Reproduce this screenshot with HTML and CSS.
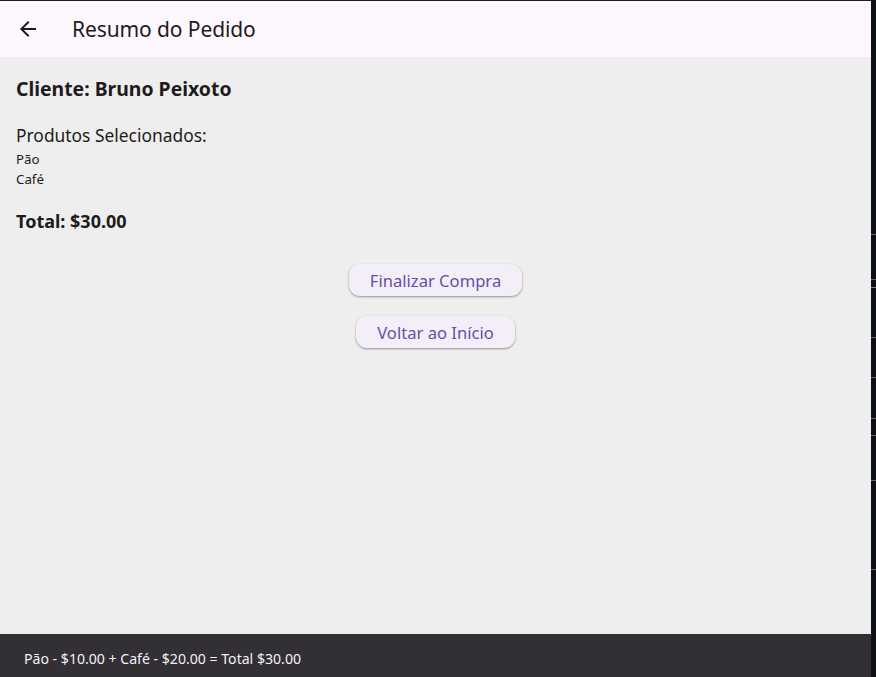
FILE: index.html
```html
<!DOCTYPE html>
<html lang="pt">
<head>
<meta charset="utf-8">
<title>Resumo do Pedido</title>
<link rel="stylesheet" href="styles.css">
</head>
<body>
<div class="screen">
  <div class="app">
    <header class="appbar">
      <button class="back" aria-label="Voltar">
        <svg width="24" height="24" viewBox="0 0 24 24"><path d="M20 11H7.83l5.59-5.59L12 4l-8 8 8 8 1.41-1.41L7.83 13H20v-2z" fill="#1d1b20"/></svg>
      </button>
      <h1 class="title">Resumo do Pedido</h1>
    </header>
    <main class="content">
      <h2 class="client">Cliente: Bruno Peixoto</h2>
      <p class="section">Produtos Selecionados:</p>
      <ul class="items">
        <li>Pão</li>
        <li>Café</li>
      </ul>
      <p class="total">Total: $30.00</p>
      <div class="actions">
        <button class="btn">Finalizar Compra</button>
        <button class="btn">Voltar ao Início</button>
      </div>
    </main>
    <footer class="snackbar">Pão - $10.00 + Café - $20.00 = Total $30.00</footer>
  </div>
  <div class="side">
    <span class="tick t1"></span>
    <span class="tick t2"></span>
    <span class="tick t3"></span>
    <span class="tick t4"></span>
    <span class="tick t5"></span>
    <span class="tick t6"></span>
    <span class="tick t7"></span>
    <span class="tick t8"></span>
    <span class="tick t9"></span>
  </div>
</div>
</body>
</html>
```

FILE: styles.css
```css
* { box-sizing: border-box; }
html, body { margin: 0; padding: 0; }
body {
  width: 876px;
  height: 677px;
  overflow: hidden;
  font-family: "Noto Sans", "Open Sans", sans-serif;
  background: #0d1015;
}
.screen {
  display: flex;
  width: 876px;
  height: 677px;
}
.app {
  width: 871px;
  height: 677px;
  display: flex;
  flex-direction: column;
  border-top: 1px solid #1e1e22;
  background: #eeeeee;
}
.appbar {
  height: 56px;
  flex: none;
  display: flex;
  align-items: center;
  background: #fdf7fe;
  padding-left: 16px;
}
.back {
  width: 24px;
  height: 24px;
  padding: 0;
  border: 0;
  background: none;
  display: flex;
  align-items: center;
  justify-content: center;
}
.title {
  margin: 0 0 0 32px;
  font-size: 21px;
  font-weight: 400;
  color: #1d1b20;
  letter-spacing: -0.1px;
}
.content {
  flex: 1;
  padding: 16px;
  color: #1d1b20;
}
.client {
  margin: 0;
  font-size: 19.4px;
  font-weight: 700;
  line-height: 32px;
}
.section {
  margin: 18px 0 0;
  font-size: 17.4px;
  line-height: 24px;
}
.items {
  list-style: none;
  margin: 2px 0 0;
  padding: 0;
  font-size: 13.3px;
  line-height: 20px;
}
.total {
  margin: 20px 0 0;
  font-size: 18px;
  font-weight: 700;
  line-height: 24px;
}
.actions {
  margin-top: 31px;
  display: flex;
  flex-direction: column;
  align-items: center;
  gap: 20px;
}
.btn {
  height: 32px;
  padding: 0 21px;
  border: 0;
  border-radius: 11px;
  background: #f4eef8;
  color: #6750a4;
  font-family: inherit;
  font-size: 16.6px;
  box-shadow: 0 1px 2px rgba(0,0,0,0.28), 0 1px 3px rgba(0,0,0,0.12);
}
.snackbar {
  height: 43px;
  flex: none;
  background: #322f35;
  color: #f5eff7;
  font-size: 14.1px;
  padding: 15px 24px 0;
  line-height: 20px;
}
.side {
  position: relative;
  width: 5px;
  height: 677px;
  background: #0d1015;
}
.tick {
  position: absolute;
  left: 0;
  width: 5px;
  height: 1px;
  background: #6a6660;
}
.t1 { top: 234px; }
.t2 { top: 279px; }
.t3 { top: 287px; background: #8a8278; }
.t4 { top: 337px; }
.t5 { top: 377px; }
.t6 { top: 418px; }
.t7 { top: 435px; }
.t8 { top: 480px; }
.t9 { top: 569px; }
```
